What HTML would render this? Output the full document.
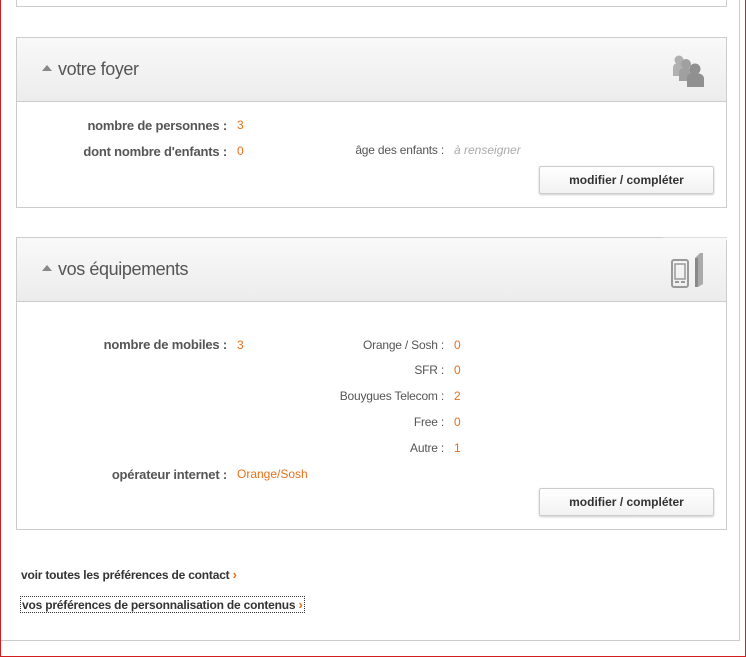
<!DOCTYPE html>
<html><head><meta charset="utf-8"><style>
*{margin:0;padding:0;box-sizing:border-box}
body{width:746px;height:657px;position:relative;background:#fff;font-family:"Liberation Sans",Arial,sans-serif;overflow:hidden}
.frame{position:absolute;left:0;top:0;width:746px;height:657px;border:1px solid #d21e1e;border-top:none}
.inner{position:absolute;left:1px;top:0;width:739px;height:641px;border-right:1px solid #ccc;border-bottom:1px solid #ccc}
.topbox{position:absolute;left:16px;top:-2px;width:711px;height:9px;border:1px solid #ccc;border-top:none}
.box{position:absolute;left:16px;width:711px;border:1px solid #ccc;background:#fff}
.hd{height:64px;background:linear-gradient(#f9f9f9,#ececec);border-bottom:1px solid #ccc;position:relative}
.hd .t{position:absolute;left:25px;top:21px;font-size:18px;color:#555;letter-spacing:-0.4px}
.hd .t:before{content:"";display:inline-block;border-left:5px solid transparent;border-right:5px solid transparent;border-bottom:6px solid #888;margin-right:6px;vertical-align:4px}
.lbl{position:absolute;font-size:13px;font-weight:bold;color:#555;text-align:right;width:210px;letter-spacing:-0.2px}
.val{position:absolute;font-size:12px;color:#e8701a}
.sm{position:absolute;font-size:12px;color:#555;text-align:right;width:200px;letter-spacing:-0.2px}
.btn{position:absolute;right:12px;width:175px;height:28px;border:1px solid #ccc;border-radius:2px;background:linear-gradient(#fff,#f2f2f2);box-shadow:0 1px 2px rgba(0,0,0,.2);font-size:12px;font-weight:bold;color:#333;text-align:center;line-height:27px}
.lk{position:absolute;left:21px;font-size:12px;font-weight:bold;color:#333;letter-spacing:-0.2px}
.lk b{color:#e8701a;font-size:13px}
</style></head><body>
<div class="frame"></div>
<div class="inner"></div>
<div class="topbox"></div>

<div class="box" style="top:37px;height:171px">
 <div class="hd"><div class="t">votre foyer</div>
  <svg style="position:absolute;left:654px;top:16px" width="34" height="34" viewBox="0 0 34 34">
   <circle cx="8" cy="6" r="4.5" fill="#b0b0b0"/><path d="M2 22v-8q0-5 6-5t6 5v8z" fill="#b0b0b0"/>
   <circle cx="15" cy="10" r="5" fill="#a0a0a0"/><path d="M8 27v-9q0-4 7-4t7 4v9z" fill="#a0a0a0"/>
   <circle cx="24" cy="15" r="5.5" fill="#909090"/><path d="M16 33v-9q0-5 8-5t9 5v9z" fill="#909090"/>
  </svg>
 </div>
 <div class="lbl" style="left:0;top:80px">nombre de personnes :</div><div class="val" style="left:220px;top:80px">3</div>
 <div class="lbl" style="left:0;top:106px">dont nombre d'enfants :</div><div class="val" style="left:220px;top:106px">0</div>
 <div class="sm" style="left:227px;top:105px">âge des enfants :</div>
 <div class="val" style="left:437px;top:105px;color:#aaa;font-style:italic">à renseigner</div>
 <div class="btn" style="top:128px">modifier / compléter</div>
</div>

<div class="box" style="top:237px;height:293px">
 <div class="hd"><div class="t">vos équipements</div>
  <div style="position:absolute;right:-1px;top:-1px;width:64px;height:3px;background:#f9f9f9;border-top:1px solid #ddd"></div>
  <svg style="position:absolute;left:652px;top:12px" width="40" height="40" viewBox="0 0 40 40">
   <rect x="3" y="10" width="16" height="27" rx="2" fill="none" stroke="#999" stroke-width="2"/>
   <rect x="6" y="14" width="10" height="15" fill="none" stroke="#999" stroke-width="1.5"/>
   <rect x="6" y="31" width="4" height="2" fill="#999"/><rect x="12" y="31" width="4" height="2" fill="#999"/>
   <path d="M26 8l5-5h3v31l-5 3h-3z" fill="#aaa"/><path d="M26 8h3v29h-3z" fill="#888"/>
  </svg>
 </div>
 <div class="lbl" style="left:0;top:99px">nombre de mobiles :</div><div class="val" style="left:220px;top:100px">3</div>
 <div class="sm" style="left:227px;top:100px">Orange / Sosh :</div><div class="val" style="left:437px;top:100px">0</div>
 <div class="sm" style="left:227px;top:125px">SFR :</div><div class="val" style="left:437px;top:125px">0</div>
 <div class="sm" style="left:227px;top:151px">Bouygues Telecom :</div><div class="val" style="left:437px;top:151px">2</div>
 <div class="sm" style="left:227px;top:177px">Free :</div><div class="val" style="left:437px;top:177px">0</div>
 <div class="sm" style="left:227px;top:203px">Autre :</div><div class="val" style="left:437px;top:203px">1</div>
 <div class="lbl" style="left:0;top:229px">opérateur internet :</div><div class="val" style="left:220px;top:229px">Orange/Sosh</div>
 <div class="btn" style="top:250px">modifier / compléter</div>
</div>

<div class="lk" style="top:567px">voir toutes les préférences de contact <b>›</b></div>
<div class="lk" style="top:597px;outline:1px dotted #333;padding:0 1px">vos préférences de personnalisation de contenus <b>›</b></div>
</body></html>
